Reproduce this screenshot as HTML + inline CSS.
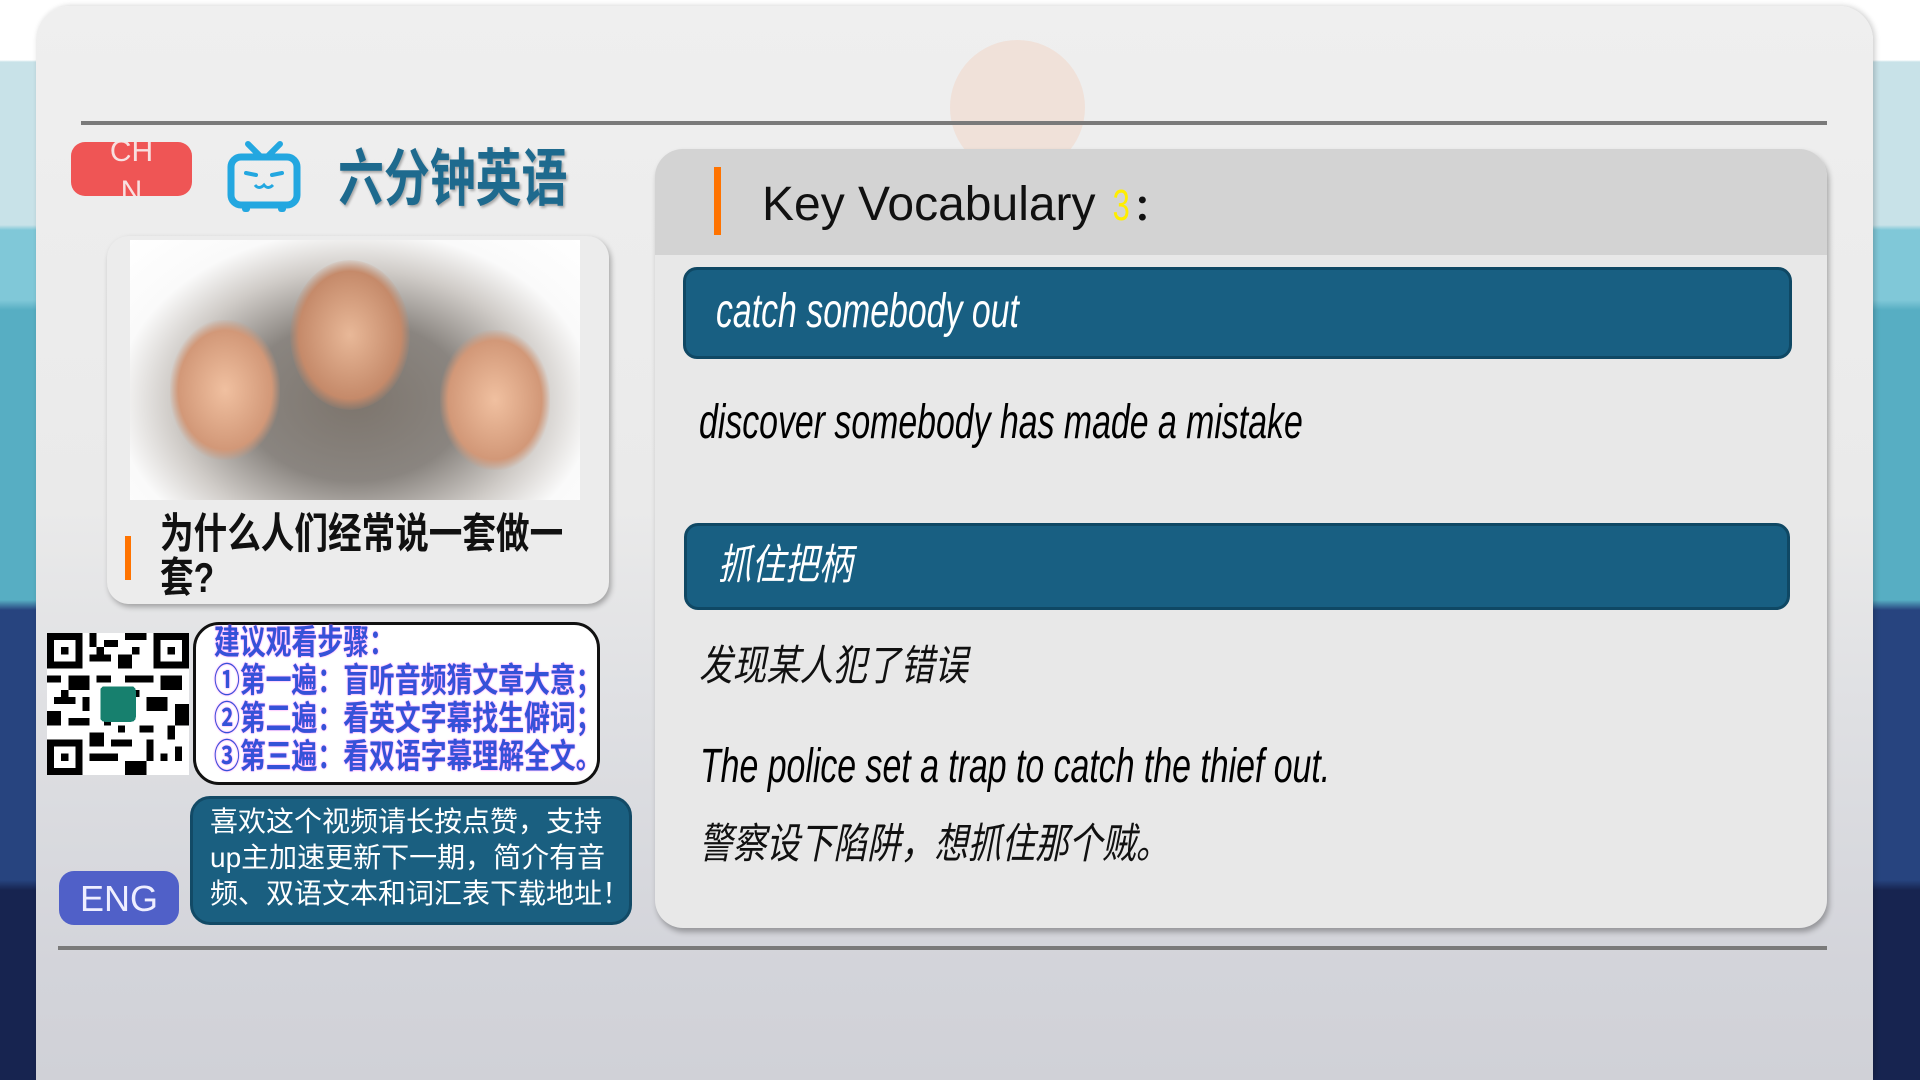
<!DOCTYPE html>
<html><head><meta charset="utf-8"><style>
*{margin:0;padding:0;box-sizing:border-box}
body{width:1920px;height:1080px;overflow:hidden;position:relative;font-family:"Liberation Sans","Noto Sans CJK SC",sans-serif;background:linear-gradient(180deg,#fff 0,#fff 60px,#c8e2e8 62px,#c8e2e8 225px,#80c8d8 230px,#80c8d8 300px,#57aec3 310px,#57aec3 600px,#27447f 610px,#27447f 880px,#172450 890px)}
.abs{position:absolute;white-space:nowrap}
#panel{left:36px;top:6px;width:1837px;height:1074px;border-radius:34px 34px 0 0;background:linear-gradient(180deg,#efefef 0,#eaeaea 500px,#dfe0e3 700px,#d3d4da 960px,#d0d1d7 100%);box-shadow:2px 0 6px rgba(0,0,0,.2)}
.line{height:4px;background:#7a7a7a}
.cn{font-family:"Liberation Sans","Noto Sans CJK SC",sans-serif}
.en{font-family:"Liberation Sans",sans-serif;font-style:italic;transform:scaleX(.705);transform-origin:0 0}
.sq{transform-origin:0 0}
</style></head><body>
<div id="panel" class="abs"></div>
<div class="abs" style="left:950px;top:40px;width:135px;height:135px;border-radius:50%;background:#f0ddd3;opacity:.8"></div>
<div class="abs line" style="left:81px;top:121px;width:1746px"></div>
<div class="abs line" style="left:58px;top:946px;width:1769px"></div>

<div class="abs" style="left:71px;top:142px;width:121px;height:54px;background:#ef5555;border-radius:14px;font-size:30px;text-align:center;line-height:40px;overflow:hidden"><div style="margin-top:-10px;color:#f8e0e0">CH<br>N</div></div>

<svg class="abs" style="left:226px;top:140px" width="76" height="74" viewBox="0 0 76 74">
<path d="M22 4 L34 16 M54 4 L42 16" stroke="#23a7e0" stroke-width="6" stroke-linecap="round"/>
<rect x="5" y="17" width="66" height="48" rx="10" fill="none" stroke="#23a7e0" stroke-width="7"/>
<path d="M20 33 L30 35 M46 35 L56 33" stroke="#23a7e0" stroke-width="4" stroke-linecap="round"/>
<path d="M29 45 q4 5 9 0 q4 5 9 0" fill="none" stroke="#23a7e0" stroke-width="3"/>
<rect x="16" y="65" width="8" height="7" rx="3" fill="#23a7e0"/><rect x="52" y="65" width="8" height="7" rx="3" fill="#23a7e0"/>
</svg>
<div class="abs cn sq" style="left:338px;top:144px;font-size:62px;font-weight:bold;color:#1e6a8e;text-shadow:2px 2px 3px rgba(0,0,0,.3);line-height:72px;transform:scaleX(.74)">六分钟英语</div>

<div class="abs" style="left:107px;top:236px;width:502px;height:368px;border-radius:22px;background:#ececec;box-shadow:2px 3px 6px rgba(0,0,0,.3)"></div>
<div class="abs" style="left:130px;top:240px;width:450px;height:260px;background:radial-gradient(ellipse at 50% 62%,#7d756d 0,#8a8580 35%,#d0ccc8 58%,#fafafa 75%,#fff 100%)"></div>
<div class="abs" style="left:290px;top:260px;width:120px;height:150px;border-radius:50%;background:radial-gradient(#e8b898,#c58a6a 60%,transparent 72%)"></div>
<div class="abs" style="left:170px;top:320px;width:110px;height:140px;border-radius:45%;background:radial-gradient(#f0c0a0,#d29878 60%,transparent 72%)"></div>
<div class="abs" style="left:440px;top:330px;width:110px;height:140px;border-radius:45%;background:radial-gradient(#f0c0a0,#d29878 60%,transparent 72%)"></div>
<div class="abs" style="left:125px;top:536px;width:6px;height:44px;background:#ff7300"></div>
<div class="abs cn sq" style="left:160px;top:512px;font-size:42px;font-weight:bold;line-height:44px;color:#111;transform:scaleX(.8)">为什么人们经常说一套做一<br>套?</div>

<svg class="abs" style="left:46px;top:633px" width="144" height="142" viewBox="0 0 20 20" shape-rendering="crispEdges">
<rect width="20" height="20" fill="#fff"/>
<g fill="#000">
<rect x="0" y="0" width="5" height="5"/><rect x="15" y="0" width="5" height="5"/><rect x="0" y="15" width="5" height="5"/>
<rect x="6" y="0" width="1" height="2"/><rect x="8" y="1" width="2" height="1"/><rect x="11" y="0" width="3" height="1"/><rect x="6" y="3" width="3" height="1"/><rect x="10" y="3" width="2" height="2"/><rect x="0" y="6" width="2" height="1"/><rect x="3" y="6" width="3" height="2"/><rect x="7" y="6" width="2" height="1"/><rect x="11" y="6" width="4" height="1"/><rect x="16" y="6" width="3" height="2"/><rect x="1" y="9" width="3" height="1"/><rect x="0" y="11" width="2" height="2"/><rect x="3" y="12" width="3" height="1"/><rect x="14" y="9" width="3" height="2"/><rect x="18" y="10" width="2" height="3"/><rect x="13" y="13" width="2" height="1"/><rect x="6" y="14" width="2" height="2"/><rect x="9" y="15" width="3" height="1"/><rect x="6" y="17" width="4" height="1"/><rect x="11" y="18" width="3" height="2"/><rect x="14" y="15" width="1" height="3"/><rect x="16" y="17" width="1" height="1"/><rect x="5" y="9" width="1" height="2"/><rect x="12" y="8" width="1" height="1"/>
<rect x="7" y="2" width="1" height="1"/><rect x="12" y="2" width="1" height="1"/><rect x="2" y="8" width="1" height="1"/><rect x="17" y="13" width="1" height="2"/><rect x="8" y="12" width="1" height="1"/><rect x="10" y="13" width="1" height="1"/><rect x="18" y="16" width="1" height="2"/>
</g>
<g fill="#fff"><rect x="1" y="1" width="3" height="3"/><rect x="16" y="1" width="3" height="3"/><rect x="1" y="16" width="3" height="3"/></g>
<g fill="#000"><rect x="2" y="2" width="1" height="1"/><rect x="17" y="2" width="1" height="1"/><rect x="2" y="17" width="1" height="1"/></g>
<rect x="7.5" y="7.5" width="5" height="5" rx=".6" fill="#17806e"/>
</svg>

<div class="abs" style="left:193px;top:622px;width:407px;height:163px;background:#fff;border:3px solid #111;border-radius:26px"></div>
<div class="abs cn sq" style="left:214px;top:624px;font-size:34px;line-height:38px;font-weight:bold;color:#3552d8;text-shadow:0 0 2px #f6f;transform:scaleX(.76)">建议观看步骤：<br>①第一遍：盲听音频猜文章大意；<br>②第二遍：看英文字幕找生僻词；<br>③第三遍：看双语字幕理解全文。</div>

<div class="abs" style="left:190px;top:796px;width:442px;height:129px;background:#1a5f80;border:3px solid #124a66;border-radius:20px"></div>
<div class="abs cn" style="left:210px;top:804px;font-size:28px;line-height:36px;color:#fff">喜欢这个视频请长按点赞，支持<br>up主加速更新下一期，简介有音<br>频、双语文本和词汇表下载地址！</div>

<div class="abs" style="left:59px;top:871px;width:120px;height:54px;background:#5060c8;border-radius:15px;color:#eef;font-size:36px;text-align:center;line-height:56px">ENG</div>

<div class="abs" style="left:655px;top:149px;width:1172px;height:779px;border-radius:28px;background:#e8e8e8;box-shadow:2px 4px 6px rgba(0,0,0,.3);overflow:hidden">
 <div style="height:106px;background:#d3d3d3"></div>
</div>
<div class="abs" style="left:714px;top:167px;width:7px;height:68px;background:#ff7300"></div>
<div class="abs" style="left:762px;top:177px;font-size:48px;color:#111;line-height:56px">Key Vocabulary <span style="color:#ffee00;font-size:44px;display:inline-block;transform:scaleX(.7)">3</span><b style="font-size:36px">：</b></div>

<div class="abs" style="left:683px;top:267px;width:1109px;height:92px;background:#185f82;border:3px solid #0f4864;border-radius:14px"></div>
<div class="abs en" style="left:716px;top:284px;font-size:48px;color:#fff;line-height:56px">catch somebody out</div>
<div class="abs en" style="left:699px;top:395px;font-size:48px;color:#000;line-height:56px">discover somebody has made a mistake</div>

<div class="abs" style="left:684px;top:523px;width:1106px;height:87px;background:#185f82;border:3px solid #0f4864;border-radius:14px"></div>
<div class="abs cn sq" style="left:718px;top:538px;font-size:42px;font-style:italic;color:#fff;line-height:54px;transform:scaleX(.8)">抓住把柄</div>
<div class="abs cn sq" style="left:699px;top:639px;font-size:42px;font-style:italic;color:#111;line-height:54px;transform:scaleX(.8)">发现某人犯了错误</div>
<div class="abs en" style="left:700px;top:739px;font-size:48px;color:#000;line-height:56px">The police set a trap to catch the thief out.</div>
<div class="abs cn sq" style="left:699px;top:817px;font-size:42px;font-style:italic;color:#111;line-height:54px;transform:scaleX(.8)">警察设下陷阱，想抓住那个贼。</div>
</body></html>
